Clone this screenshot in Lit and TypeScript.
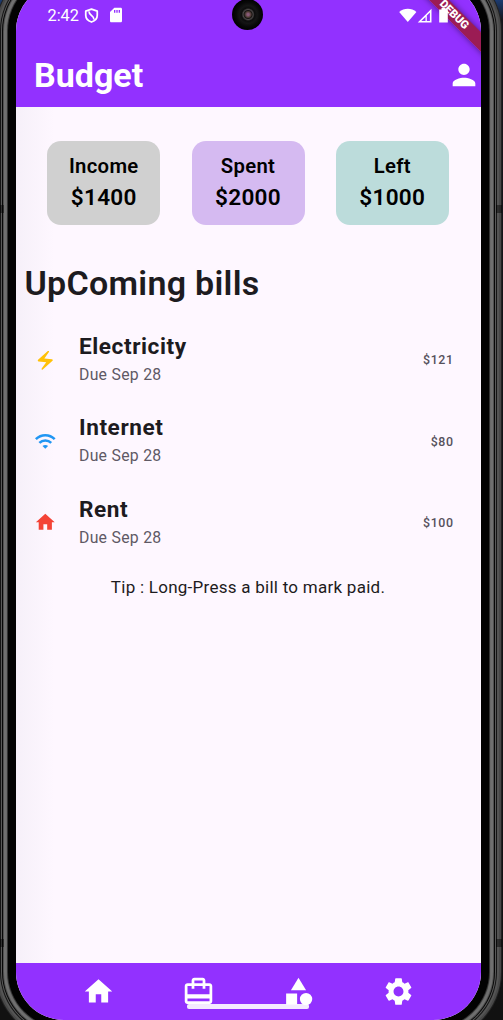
import { LitElement, html, css, svg } from "lit";
import { customElement, property } from "lit/decorators.js";

const icons: Record<string, unknown> = {
  home: svg`<path d="M10 20v-6h4v6h5v-8h3L12 3 2 12h3v8z"/>`,
  bag: svg`<path d="M20 6h-3V4c0-1.11-.89-2-2-2H9c-1.11 0-2 .89-2 2v2H4c-1.11 0-2 .89-2 2v11c0 1.11.89 2 2 2h16c1.11 0 2-.89 2-2V8c0-1.11-.89-2-2-2zM9 4h6v2H9V4zm11 15H4v-2h16v2zm0-5H4V8h3v2h2V8h6v2h2V8h3v6z"/>`,
  category: svg`<path d="M12 2l-5.5 9h11z"/><circle cx="17.5" cy="17.5" r="4.5"/><path d="M3 13.5h8v8H3z"/>`,
  settings: svg`<path d="M19.14 12.94c.04-.3.06-.61.06-.94 0-.32-.02-.64-.07-.94l2.03-1.58c.18-.14.23-.41.12-.61l-1.92-3.32c-.12-.22-.37-.29-.59-.22l-2.39.96c-.5-.38-1.03-.7-1.62-.94l-.36-2.54c-.04-.24-.24-.41-.48-.41h-3.84c-.24 0-.43.17-.47.41l-.36 2.54c-.59.24-1.13.57-1.62.94l-2.39-.96c-.22-.08-.47 0-.59.22L2.74 8.87c-.12.21-.08.47.12.61l2.03 1.58c-.05.3-.09.63-.09.94s.02.64.07.94l-2.03 1.58c-.18.14-.23.41-.12.61l1.92 3.32c.12.22.37.29.59.22l2.39-.96c.5.38 1.03.7 1.62.94l.36 2.54c.05.24.24.41.48.41h3.84c.24 0 .44-.17.47-.41l.36-2.54c.59-.24 1.13-.56 1.62-.94l2.39.96c.22.08.47 0 .59-.22l1.92-3.32c.12-.22.07-.47-.12-.61l-2.01-1.58zM12 15.6c-1.98 0-3.600-1.620-3.600-3.600s1.620-3.600 3.600-3.600 3.600 1.620 3.600 3.600-1.620 3.600-3.600 3.600z"/>`,
  person: svg`<path d="M12 12c2.21 0 4-1.79 4-4s-1.79-4-4-4-4 1.79-4 4 1.79 4 4 4zm0 2c-2.67 0-8 1.34-8 4v2h16v-2c0-2.66-5.33-4-8-4z"/>`,
  bolt: svg`<path d="M14.69 2.21L4.33 11.49c-.64.58-.28 1.65.58 1.73L13 14l-4.85 6.76c-.22.31-.19.74.08 1.01.3.3.77.31 1.08.02l10.36-9.28c.64-.58.28-1.65-.58-1.73L11 10l4.85-6.76c.22-.31.19-.74-.08-1.01-.3-.3-.77-.31-1.08-.02z"/>`,
  wifi: svg`<g fill="none" stroke="currentColor" stroke-width="2.7"><path d="M2 9.7C7.6 4.2 16.4 4.2 22 9.7"/><path d="M5.7 13.7c3.5-3.4 9.1-3.4 12.6 0"/></g><path d="M12 20l-3-3c1.7-1.5 4.3-1.5 6 0z"/>`,
  shield: svg`<g fill="none" stroke="currentColor" stroke-width="2.8" stroke-linejoin="round"><path d="M12 1.800L2.800 5v6.400c0 5 3.600 9 9.200 11 5.600-2 9.200-6 9.200-11V5z"/><path d="M8 5.500c-.5 6 8.500 6.500 8 13"/></g>`,
  sd: svg`<path d="M19 1H9.500L3 7.500V21c0 1.100.9 2 2 2h14c1.100 0 2-.9 2-2V3c0-1.100-.9-2-2-2zM11 8.500H9V4.500h2zm3.500 0h-2V4.500h2zm3.500 0h-2V4.500h2z"/>`,
};

@customElement("app-icon")
class AppIcon extends LitElement {
  @property() name = "home";
  static styles = css`
    :host { display: block; flex: none; }
    svg { display: block; width: 100%; height: 100%; fill: currentColor; }
  `;
  render() {
    return html`<svg viewBox="0 0 24 24">${icons[this.name]}</svg>`;
  }
}

@customElement("bill-row")
class BillRow extends LitElement {
  @property() icon = "";
  @property() name = "";
  @property() due = "";
  @property() amount = "";
  static styles = css`
    :host { display: flex; align-items: center; height: 81.4px; padding: 0 27.500px 0 17.500px; box-sizing: border-box; }
    .icon { width: 22.600px; height: 22.600px; margin-right: 22.900px; }
    .icon.bolt { color: #ffc107; }
    .icon.wifi { color: #2196f3; }
    .icon.home { color: #f44336; }
    .text { flex: 1; display: flex; flex-direction: column; padding-bottom: 2px; }
    .name { font-size: 22.600px; line-height: 30px; font-weight: 700; letter-spacing: .57px; color: #1d1b20; }
    .due { font-size: 15.800px; line-height: 22px; margin-top: 2px; letter-spacing: .28px; color: #5f5965; }
    .amount { font-size: 12.400px; font-weight: 500; letter-spacing: .57px; color: #56515c; }
  `;
  render() {
    return html`
      <app-icon class="icon ${this.icon}" .name=${this.icon}></app-icon>
      <div class="text"><span class="name">${this.name}</span><span class="due">${this.due}</span></div>
      <span class="amount">${this.amount}</span>
    `;
  }
}

@customElement("app-root")
class AppRoot extends LitElement {
  static styles = css`
    :host {
      display: block; position: relative; width: 503px; height: 1020px; overflow: hidden;
      background: linear-gradient(#1c3b70, #15151b 20px, #111 100%);
      font-family: Roboto, sans-serif;
    }
    .screen {
      display: flex; flex-direction: column; box-sizing: border-box;
      width: 465px; height: 1037px; margin: -17px 0 0 16px; border-radius: 48px;
      background: linear-gradient(90deg, #f6f0f9, #fef7ff 38px);
      box-shadow: 0 0 0 8px #020202, 0 0 0 9px #333, 0 0 0 10px #6a6a6a, 0 0 0 12px #707070,
        0 0 0 13px #505050, 0 0 0 14px #080808, 0 0 0 15px #5a5a5a, 0 0 0 16px #151515,
        0 0 0 18px #555, 0 0 0 20px #484848, 0 0 0 21px #222;
    }
    .clip { position: relative; flex: 1; display: flex; flex-direction: column; padding-top: 17px; border-radius: 48px; overflow: hidden; }
    .top { height: 106.500px; background: #9231ff; color: #fff; display: flex; flex-direction: column; }
    .status { position: relative; z-index: 1; height: 30px; display: flex; align-items: center; padding: 0 32.500px 0 31.500px; }
    .time { font-size: 16.300px; letter-spacing: 0; width: 36.500px; }
    .shield { width: 15px; height: 15px; margin-right: 9px; }
    .sd { width: 16px; height: 16px; }
    .right { margin-left: auto; display: block; width: 50px; height: 15px; fill: #fff; }
    .bar { flex: 1; display: flex; align-items: center; justify-content: space-between; padding: 12.500px .500px 0 18px; }
    .title { font-size: 34px; font-weight: 700; }
    .person { width: 34px; height: 34px; color: #fff; }
    .cards { display: flex; justify-content: space-evenly; margin-top: 34px; padding-right: 1px; }
    .card {
      width: 113px; height: 84.500px; border-radius: 14px; color: #000; font-weight: 600;
      display: flex; flex-direction: column; align-items: center; justify-content: center;
    }
    .income { background: #d0d0d0; }
    .spent { background: #d5baf1; }
    .left { background: #bcdcdb; }
    .label { font-size: 20.300px; line-height: 29px; letter-spacing: .3px; }
    .value { font-size: 22.600px; line-height: 33px; letter-spacing: .3px; }
    .heading { margin: 36px 0 0 8.500px; font-size: 34px; line-height: 44px; font-weight: 600; letter-spacing: .28px; color: #1d1b20; }
    .list { margin-top: 14.300px; }
    .tip { text-align: center; font-size: 17px; line-height: 24px; letter-spacing: .26px; color: #1d1b20; margin-top: 11.500px; padding-right: 1px; }
    .nav {
      margin-top: auto; height: 57px; background: #9231ff; color: #fff;
      display: flex; justify-content: space-between; padding: 11.500px 66px 0; box-sizing: border-box;
    }
    .nav app-icon { width: 33px; height: 33px; }
    .gesture { position: absolute; left: 171px; bottom: 11.500px; width: 122px; height: 5px; border-radius: 2px; background: rgba(255, 255, 255, .9); }
    .camera {
      position: absolute; left: 232px; top: -1px; width: 31px; height: 31px; border-radius: 50%;
      background: radial-gradient(circle at 52% 50%, #8a5b79 0 1px, #49382f 3px, #171314 4px, #4b4747 5px, #0c0c0c 6.500px, #151515 9px, #090909 12px, #020202 15px);
    }
    .debug {
      position: absolute; left: 415px; top: 24.500px; width: 46px; height: 13.500px; line-height: 13.500px;
      transform: rotate(45deg); color: #fff; text-align: center; white-space: nowrap;
      font-size: 11.300px; font-weight: 900;
    }
    .debug::before {
      content: ""; position: absolute; z-index: -1; inset: 0 -40px;
      background: rgba(156, 27, 75, .95); box-shadow: 0 0 6px rgba(0, 0, 0, .5);
    }
    .band { position: absolute; width: 8px; height: 8px; background: rgba(0, 0, 0, .45); }
    .l { left: 0; width: 4px; }
    .r { right: 1px; width: 6px; }
    .upper { top: 205px; }
    .lower { top: 939px; }
  `;

  render() {
    const cards = [
      { kind: "income", label: "Income", value: "$1400" },
      { kind: "spent", label: "Spent", value: "$2000" },
      { kind: "left", label: "Left", value: "$1000" },
    ];
    return html`
      <div class="screen"><div class="clip">
        <header class="top">
          <div class="status">
            <span class="time">2:42</span>
            <app-icon class="shield" name="shield"></app-icon>
            <app-icon class="sd" name="sd"></app-icon>
            <svg class="right" viewBox="0 0 50 15">
              <path d="M.2 4C5-.3 12.600-.3 17.400 4L8.800 14z"/>
              <path d="M32.500.7V14.500H18.700zM30.900 4.500L27.800 7.600V13h3.100zM26.500 8.900L22.300 13h4.200z" fill-rule="evenodd"/>
              <path d="M42.500 0h4v1.500h2.300V14.500h-8.600V1.500h2.300z"/>
            </svg>
          </div>
          <div class="bar"><span class="title">Budget</span><app-icon class="person" name="person"></app-icon></div>
        </header>
        <div class="cards">
          ${cards.map((c) => html`<div class="card ${c.kind}"><span class="label">${c.label}</span><span class="value">${c.value}</span></div>`)}
        </div>
        <div class="heading">UpComing bills</div>
        <div class="list">
          <bill-row icon="bolt" name="Electricity" due="Due Sep 28" amount="$121"></bill-row>
          <bill-row icon="wifi" name="Internet" due="Due Sep 28" amount="$80"></bill-row>
          <bill-row icon="home" name="Rent" due="Due Sep 28" amount="$100"></bill-row>
        </div>
        <div class="tip">Tip : Long-Press a bill to mark paid.</div>
        <nav class="nav">
          ${["home", "bag", "category", "settings"].map((n) => html`<app-icon .name=${n}></app-icon>`)}
        </nav>
        <div class="gesture"></div>
        <div class="debug">DEBUG</div>
      </div></div>
      <div class="camera"></div>
      <div class="band l upper"></div><div class="band r upper"></div>
      <div class="band l lower"></div><div class="band r lower"></div>
    `;
  }
}
